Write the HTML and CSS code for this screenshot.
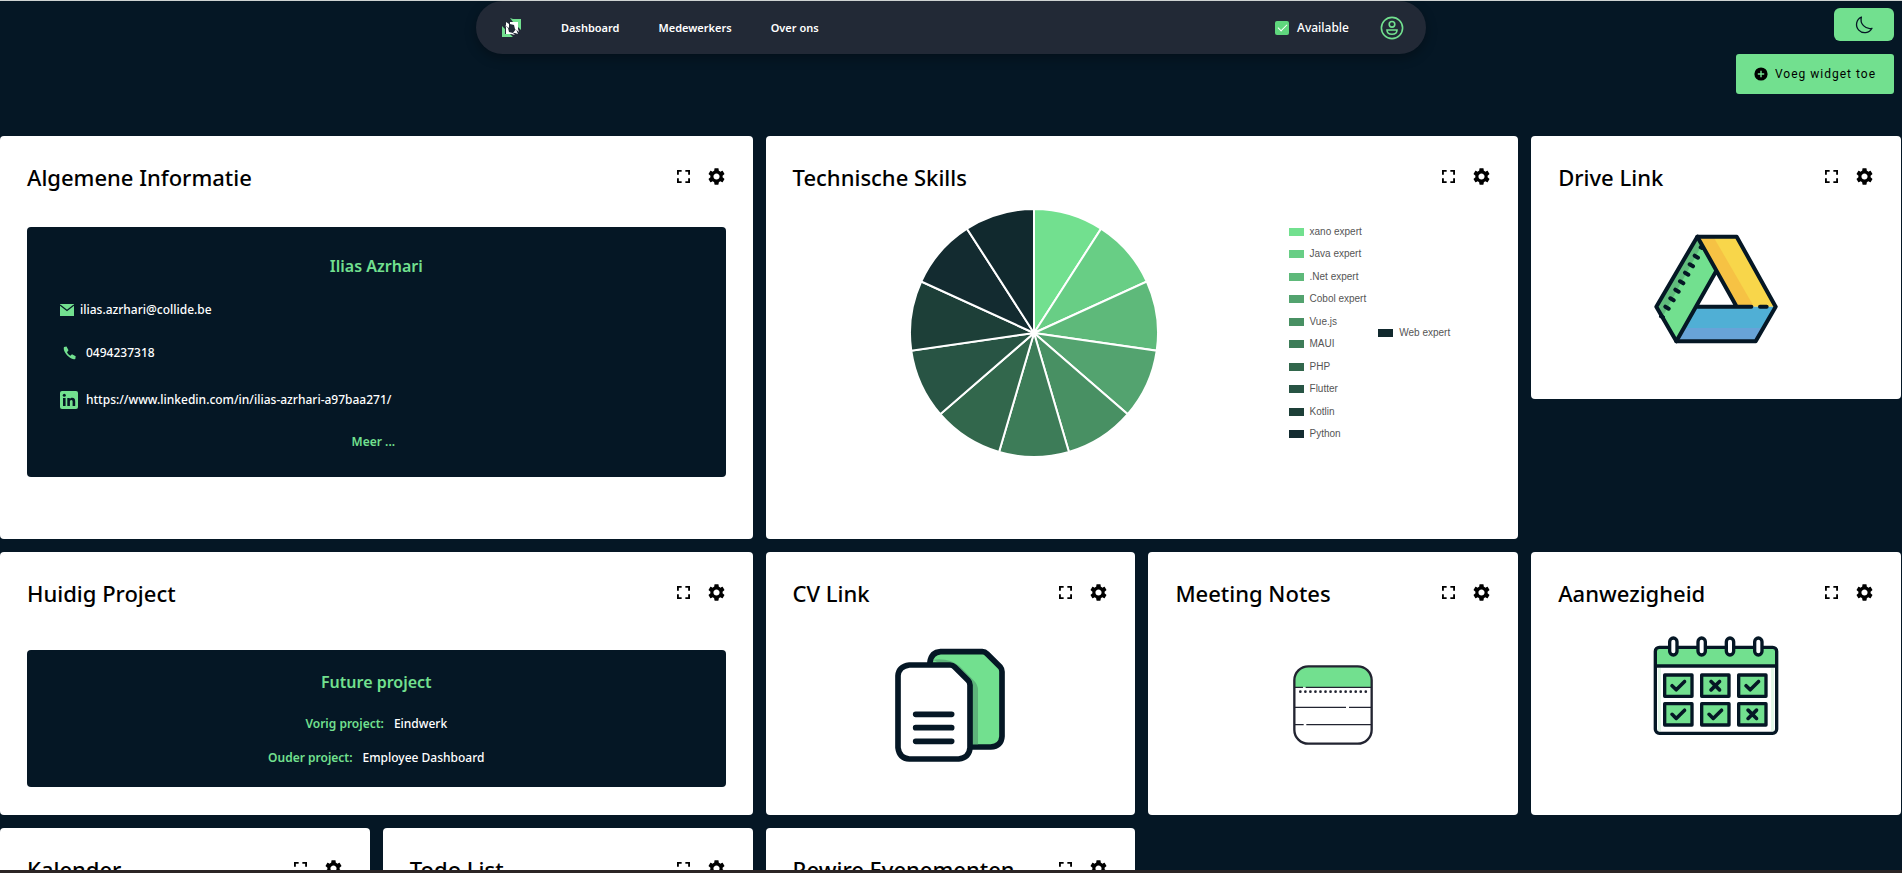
FILE: index.html
```html
<!DOCTYPE html>
<html lang="nl">
<head>
<meta charset="utf-8">
<title>Dashboard</title>
<link rel="stylesheet" href="styles.css">
</head>
<body>
<svg class="defs" aria-hidden="true">
  <symbol id="expand" viewBox="0 0 14 14"><path d="M1 5V1h4M9 1h4v4M13 9v4H9M5 13H1V9" fill="none" stroke="#000" stroke-width="2"/></symbol>
  <symbol id="gear" viewBox="2 2 20 20"><path d="M19.14 12.94c.04-.3.06-.61.06-.94 0-.32-.02-.64-.07-.94l2.03-1.58c.18-.14.23-.41.12-.61l-1.92-3.32c-.12-.22-.37-.29-.59-.22l-2.39.96c-.5-.38-1.03-.7-1.62-.94l-.36-2.54c-.04-.24-.24-.41-.48-.41h-3.84c-.24 0-.43.17-.47.41l-.36 2.54c-.59.24-1.13.57-1.62.94l-2.39-.96c-.22-.08-.47 0-.59.22L2.74 8.87c-.12.21-.08.47.12.61l2.03 1.58c-.05.3-.09.63-.09.94s.02.64.07.94l-2.03 1.58c-.18.14-.23.41-.12.61l1.92 3.32c.12.22.37.29.59.22l2.39-.96c.5.38 1.03.7 1.62.94l.36 2.54c.05.24.24.41.48.41h3.84c.24 0 .44-.17.47-.41l.36-2.54c.59-.24 1.13-.56 1.62-.94l2.39.96c.22.08.47 0 .59-.22l1.92-3.32c.12-.22.07-.47-.12-.61l-2.01-1.58zM12 15.6c-1.98 0-3.6-1.62-3.6-3.6s1.62-3.6 3.6-3.6 3.6 1.62 3.6 3.6-1.62 3.6-3.6 3.6z"/></symbol>
  <symbol id="check" viewBox="0 0 16 12"><path d="M2 6l4 4 8-8" fill="none" stroke="#051725" stroke-width="3.4" stroke-linecap="round" stroke-linejoin="round"/></symbol>
  <symbol id="cross" viewBox="0 0 12 12"><path d="M2 2l8 8M10 2l-8 8" fill="none" stroke="#051725" stroke-width="3.4" stroke-linecap="round"/></symbol>
</svg>

<header class="topbar">
  <nav class="nav">
    <a class="logo" href="#" aria-label="Home">
      <svg width="20" height="20" viewBox="0 0 20 20">
        <path d="M8 0l3 1h8v11l-3-3V4h-5z" fill="#72e08f"/>
        <path d="M0 8l3 3v5h5l3 3H0z" fill="#72e08f"/>
        <path d="M8 4h8v7l1 3-4-3-1-4-4-1z" fill="#fff"/>
        <path d="M3 7l3 3 1 4 4 1 2 2-4-1H4V9z" fill="#fff"/>
        <path d="M4 4l3 2v4L4 8z" fill="#fff"/>
        <path d="M11 15l3-4 2 5-3-1z" fill="#fff"/>
      </svg>
    </a>
    <a class="nav-link" href="#">Dashboard</a>
    <a class="nav-link" href="#">Medewerkers</a>
    <a class="nav-link" href="#">Over ons</a>
    <label class="available"><input type="checkbox" checked>Available</label>
    <a class="profile" href="#" aria-label="Profiel">
      <svg width="24" height="24" viewBox="0 0 24 24" fill="none" stroke="#72e08f" stroke-width="1.6"><circle cx="12" cy="12" r="10.6"/><circle cx="12" cy="8.3" r="2.8"/><path d="M7 14h10c0 2.700-2 4.300-5 4.300S7 16.700 7 14z"/></svg>
    </a>
  </nav>
  <div class="actions">
    <button class="theme" aria-label="Donker thema">
      <svg width="18" height="18" viewBox="0 0 18 18" fill="none" stroke="#051725" stroke-width="1.300" stroke-linejoin="round"><path d="M6.400 1A8.200 8.200 0 1 0 17 12.300 9 9 0 0 1 6.400 1z"/></svg>
    </button>
    <button class="add">
      <svg width="14" height="14" viewBox="0 0 14 14"><circle cx="7" cy="7" r="6.600"/><path d="M7 3.800v6.400M3.800 7h6.400" stroke="#72e08f" stroke-width="1.400"/></svg>
      Voeg widget toe
    </button>
  </div>
</header>

<main class="grid">
  <section class="card wide tall">
    <div class="card-head"><h2>Algemene Informatie</h2>
      <button aria-label="Vergroten"><svg class="i-expand"><use href="#expand"/></svg></button><button aria-label="Instellingen"><svg class="i-gear"><use href="#gear"/></svg></button></div>
    <div class="panel info">
      <h3>Ilias Azrhari</h3>
      <p class="mail"><svg width="14" height="12" viewBox="0 0 14 12"><path d="M0 0h14v12H0z" fill="#72e08f"/><path d="M0 1l7 5.500L14 1" fill="none" stroke="#051725" stroke-width="1.300"/></svg>ilias.azrhari@collide.be</p>
      <p><svg width="18" height="18" viewBox="0 0 18 18"><path d="M4 3l2.500-.5 2 3.800L7 8.300c.8 1.600 1.800 2.600 3.300 3.400l1.700-1.400 3.700 2-.4 2.600c-1.500.8-4 .1-6.800-2.400C5.300 9.700 3 5.800 4 3z" fill="#72e08f"/></svg>0494237318</p>
      <p class="linkedin"><svg width="18" height="18" viewBox="0 0 18 18"><rect width="18" height="18" rx="2" fill="#72e08f"/><path d="M3 7h2.600v8H3zM7.300 7h2.500v1.100c.5-.8 1.400-1.300 2.500-1.300 2.100 0 2.900 1.400 2.900 3.600V15h-2.600v-4.200c0-1.100-.3-1.800-1.200-1.800-1 0-1.500.7-1.500 1.800V15H7.300z" fill="#051725"/><circle cx="4.300" cy="4.300" r="1.500" fill="#051725"/></svg><a href="#">https://www.linkedin.com/in/ilias-azrhari-a97baa271/</a></p>
      <button class="more">Meer ...</button>
    </div>
  </section>

  <section class="card wide tall">
    <div class="card-head"><h2>Technische Skills</h2>
      <button aria-label="Vergroten"><svg class="i-expand"><use href="#expand"/></svg></button><button aria-label="Instellingen"><svg class="i-gear"><use href="#gear"/></svg></button></div>
    <div class="chart">
      <svg id="pie" class="pie" viewBox="-125 -125 250 250" role="img" aria-label="Skills"></svg>
      <div class="legend">
        <ul>
          <li><i class="c1"></i>xano expert</li><li><i class="c2"></i>Java expert</li><li><i class="c3"></i>.Net expert</li><li><i class="c4"></i>Cobol expert</li><li><i class="c5"></i>Vue.js</li><li><i class="c6"></i>MAUI</li><li><i class="c7"></i>PHP</li><li><i class="c8"></i>Flutter</li><li><i class="c9"></i>Kotlin</li><li><i class="c10"></i>Python</li>
        </ul>
        <ul class="single"><li><i class="c11"></i>Web expert</li></ul>
      </div>
    </div>
  </section>

  <section class="card">
    <div class="card-head"><h2>Drive Link</h2>
      <button aria-label="Vergroten"><svg class="i-expand"><use href="#expand"/></svg></button><button aria-label="Instellingen"><svg class="i-gear"><use href="#gear"/></svg></button></div>
    <a class="art" href="#" aria-label="Drive">
      <svg width="124" height="110" viewBox="0 0 372 330" stroke-linejoin="round" stroke-linecap="round">
        <path d="M130 8L7 218l60 103 118-207z" fill="#72e08f"/>
        <path d="M130 8L7 218l18 32L140 40z" fill="#60bd7c"/>
        <path d="M130 8h118l117 210H248z" fill="#f8d64a"/>
        <path d="M130 8h48l122 210h-52z" fill="#f6c244"/>
        <path d="M127 218h238l-60 104H67z" fill="#50afd5"/>
        <path d="M90 282h238l-23 40H67z" fill="#68a3d8"/>
        <g fill="none" stroke="#051725" stroke-width="12"><path d="M365 218L248 8H130L7 218l60 104h238l60-104"/><path d="M130 8l118 210M185 114L67 322M130 218h162M318 218h20"/><path d="M140 40l4 2M122 65l10 6M107 91l10 6M93 116l10 6M78 142l10 6M64 167l10 6M49 193l10 6M34 218l10 6M21 247l6 3"/></g>
      </svg></a>
  </section>

  <section class="card wide">
    <div class="card-head"><h2>Huidig Project</h2>
      <button aria-label="Vergroten"><svg class="i-expand"><use href="#expand"/></svg></button><button aria-label="Instellingen"><svg class="i-gear"><use href="#gear"/></svg></button></div>
    <div class="panel project">
      <h3>Future project</h3>
      <p><b>Vorig project:</b>Eindwerk</p>
      <p><b>Ouder project:</b>Employee Dashboard</p>
    </div>
  </section>

  <section class="card">
    <div class="card-head"><h2>CV Link</h2>
      <button aria-label="Vergroten"><svg class="i-expand"><use href="#expand"/></svg></button><button aria-label="Instellingen"><svg class="i-gear"><use href="#gear"/></svg></button></div>
    <a class="art" href="#" aria-label="CV">
      <svg width="112" height="116" viewBox="0 0 336 348" stroke="#051725" stroke-width="17" stroke-linejoin="round" stroke-linecap="round">
        <path d="M108 54V45q4-29 32-31h125q8 0 14 6l40 40q5 6 5 14v194q-2 30-34 32H108z" fill="#72e08f"/>
        <path d="M117 38q50-6 80 20l43 43q12 12 12 28v163h-20V100z" fill="#5eb47b" stroke="none"/>
        <path d="M46 54h122q8 0 14 6l40 40q6 6 6 14v188q-2 30-34 34H46q-30-2-34-34V86q2-28 34-32z" fill="#fff"/>
        <path d="M65 202h108M65 242h108M65 283h108" fill="none"/>
      </svg></a>
  </section>

  <section class="card">
    <div class="card-head"><h2>Meeting Notes</h2>
      <button aria-label="Vergroten"><svg class="i-expand"><use href="#expand"/></svg></button><button aria-label="Instellingen"><svg class="i-gear"><use href="#gear"/></svg></button></div>
    <a class="art" href="#" aria-label="Notes">
      <svg width="80" height="80" viewBox="0 0 240 240" fill="none" stroke="#222431">
        <path d="M4 67V44q2-38 44-40h144q42 2 44 40v23z" fill="#72e08f" stroke="none"/>
        <rect x="4" y="4" width="232" height="232" rx="42" stroke-width="7"/>
        <path d="M6 67h24M38 67h196M6 127h153M168 127h66M6 179h26M40 179h194" stroke-width="3.500"/>
        <path d="M22 80h200" stroke-width="8" stroke-linecap="round" stroke-dasharray="0.100 15"/>
      </svg></a>
  </section>

  <section class="card">
    <div class="card-head"><h2>Aanwezigheid</h2>
      <button aria-label="Vergroten"><svg class="i-expand"><use href="#expand"/></svg></button><button aria-label="Instellingen"><svg class="i-gear"><use href="#gear"/></svg></button></div>
    <a class="art calendar" href="#" aria-label="Aanwezigheid">
      <svg width="126" height="100" viewBox="0 0 378 300">
        <rect x="7" y="34" width="364" height="258" rx="12" fill="#fff"/>
        <path d="M7 90V44q0-10 12-10h340q12 0 12 10v46z" fill="#72e08f"/>
        <path d="M15 96h9v190h-9zM354 96h9v190h-9z" fill="#e2f7e8"/>
        <g fill="none" stroke="#051725" stroke-width="10"><rect x="7" y="34" width="364" height="258" rx="12"/><path d="M7 90h364"/></g>
        <g fill="#fff" stroke="#051725" stroke-width="10"><rect x="50" y="6" width="22" height="51" rx="11"/><rect x="135" y="6" width="22" height="51" rx="11"/><rect x="220" y="6" width="22" height="51" rx="11"/><rect x="305" y="6" width="22" height="51" rx="11"/></g>
        <g fill="#72e08f" stroke="#051725" stroke-width="10" stroke-linejoin="round"><path d="M35 117h82v64H35zM146 117h82v64h-82zM257 117h82v64h-82zM35 203h82v64H35zM146 203h82v64h-82zM257 203h82v64h-82z"/></g>
        <use href="#check" x="51" y="130" width="50" height="38"/><use href="#cross" x="168" y="130" width="38" height="38"/><use href="#check" x="273" y="130" width="50" height="38"/>
        <use href="#check" x="51" y="216" width="50" height="38"/><use href="#check" x="162" y="216" width="50" height="38"/><use href="#cross" x="279" y="216" width="38" height="38"/>
      </svg></a>
  </section>

  <section class="card"><div class="card-head"><h2>Kalender</h2>
      <button aria-label="Vergroten"><svg class="i-expand"><use href="#expand"/></svg></button><button aria-label="Instellingen"><svg class="i-gear"><use href="#gear"/></svg></button></div></section>
  <section class="card"><div class="card-head"><h2>Todo List</h2>
      <button aria-label="Vergroten"><svg class="i-expand"><use href="#expand"/></svg></button><button aria-label="Instellingen"><svg class="i-gear"><use href="#gear"/></svg></button></div></section>
  <section class="card"><div class="card-head"><h2>Rewire Evenementen</h2>
      <button aria-label="Vergroten"><svg class="i-expand"><use href="#expand"/></svg></button><button aria-label="Instellingen"><svg class="i-gear"><use href="#gear"/></svg></button></div></section>
</main>
<script src="chart.js"></script>
</body>
</html>
```
FILE: chart.js
```js
// Draws one equal slice per skill, clockwise from the top.
const colors = ["#72e08f", "#68ce85", "#5eb97a", "#53a36f", "#489063", "#3d7c58", "#32674c", "#285444", "#1d3f38", "#132b30", "#11292e"];
const radius = 124;
const point = (i) => {
  const a = (i / colors.length) * 2 * Math.PI - Math.PI / 2;
  return `${radius * Math.cos(a)} ${radius * Math.sin(a)}`;
};
document.getElementById("pie").innerHTML = colors
  .map((c, i) => `<path d="M0 0L${point(i)}A${radius} ${radius} 0 0 1 ${point(i + 1)}Z" fill="${c}"/>`)
  .join("");
```
FILE: styles.css
```css
* { box-sizing: border-box; }

body {
  display: flex;
  flex-direction: column;
  height: 100vh;
  margin: 0;
  overflow: hidden;
  border-top: 1px solid #cfd3d2;
  border-bottom: 3px solid #2b2525;
  background: #051725;
  font-family: "Noto Sans", sans-serif;
  color: #000;
}

h2, h3, p, ul { margin: 0; padding: 0; }
a { color: inherit; text-decoration: none; }
button { padding: 0; border: 0; background: none; font: inherit; color: inherit; cursor: pointer; }
svg { display: block; flex: none; }
.defs { position: absolute; width: 0; height: 0; }

.topbar {
  display: grid;
  grid-template-columns: 1fr 950px 1fr;
  flex: none;
  height: 135px;
}

.nav {
  grid-column: 2;
  display: flex;
  align-items: center;
  gap: 39px;
  height: 53px;
  padding: 0 22px 0 26px;
  border-radius: 27px;
  background: #222936;
  box-shadow: 0 4px 12px rgba(0, 0, 0, 0.3);
  color: #fff;
}

.nav-link { font-size: 11px; font-weight: 600; line-height: 16px; }
.available { display: flex; align-items: center; gap: 8px; margin-left: auto; margin-right: -8px; font-size: 12px; font-weight: 500; }

.available input {
  appearance: none;
  width: 14px;
  height: 14px;
  margin: 0;
  border-radius: 2px;
  background: #5fd67d;
}

.available input:checked::before {
  content: "";
  display: block;
  width: 4px;
  height: 8px;
  margin: 1px auto;
  border: solid #fff;
  border-width: 0 1px 1px 0;
  rotate: 45deg;
}

.actions {
  display: flex;
  flex-direction: column;
  align-items: flex-end;
  gap: 13px;
  padding: 7px 8px;
}

.theme {
  display: grid;
  place-items: center;
  width: 60px;
  height: 33px;
  border-radius: 6px;
  background: #72e08f;
}

.add {
  display: flex;
  align-items: center;
  gap: 7px;
  height: 40px;
  padding: 0 18px;
  border-radius: 3px;
  background: #72e08f;
  font: 400 12px/16px Roboto, sans-serif;
  letter-spacing: 1px;
}

.grid {
  display: grid;
  grid-template-columns: repeat(5, 1fr);
  gap: 13px;
  padding-right: 1px;
}

.card {
  display: flex;
  flex-direction: column;
  height: 263px;
  padding: 27px;
  border-radius: 4px;
  background: #fff;
}

.wide { grid-column: span 2; }
.tall { height: 403px; }

.card-head { display: flex; align-items: center; gap: 18px; height: 28px; padding-right: 1px; }
.card-head h2 { flex: 1; font-size: 22px; font-weight: 500; line-height: 28px; white-space: nowrap; }
.card-head button { margin-bottom: 2px; }
.i-expand { width: 13px; height: 13px; }
.i-gear { width: 17px; height: 17px; }

.panel {
  display: flex;
  flex-direction: column;
  border-radius: 4px;
  background: #051725;
  color: #fff;
  font-size: 12px;
  font-weight: 500;
  line-height: 18px;
}

.panel h3 { color: #72e08f; font-size: 16px; font-weight: 600; line-height: 24px; text-align: center; }

.info { margin-top: 36px; padding: 27px 33px 26px; }
.info p { display: flex; align-items: center; gap: 8px; margin-top: 25px; }
.info .mail { gap: 6px; margin-top: 23px; }
.info .linkedin { margin-top: 29px; }
.more { align-self: center; margin-top: 24px; margin-right: 6px; color: #72e08f; font-weight: 600; }

.project { margin-top: 43px; padding: 20px 0; align-items: center; }
.project p { display: flex; gap: 10px; margin-top: 16px; }
.project h3 + p { margin-top: 21px; }
.project b { color: #72e08f; font-weight: 600; }

.chart { display: flex; justify-content: space-between; margin-top: 17px; }
.pie { width: 250px; height: 250px; margin-left: 116px; stroke: #fff; stroke-width: 2; }
.legend { display: flex; align-items: center; gap: 12px; margin-right: 41px; }
.legend ul { display: flex; flex-direction: column; justify-content: space-between; height: 214px; }
.legend .single { justify-content: center; }
.legend li { display: flex; align-items: center; gap: 6px; height: 12px; color: #555; font: 10px/12px "Liberation Sans", Arial, sans-serif; }
.legend i { width: 15px; height: 8px; }

.c1 { background: #72e08f; }
.c2 { background: #68ce85; }
.c3 { background: #5eb97a; }
.c4 { background: #53a36f; }
.c5 { background: #489063; }
.c6 { background: #3d7c58; }
.c7 { background: #32674c; }
.c8 { background: #285444; }
.c9 { background: #1d3f38; }
.c10 { background: #132b30; }
.c11 { background: #11292e; }

.art { display: grid; place-items: center; flex: 1; padding-top: 14px; }
.calendar { place-items: start center; padding-top: 29px; }
```
